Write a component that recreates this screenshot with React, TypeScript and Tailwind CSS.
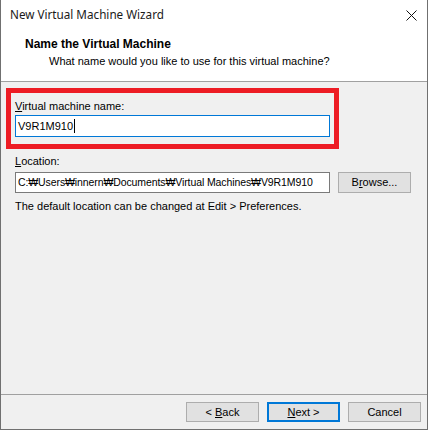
import React from 'react';

const ui = { fontFamily: '"Liberation Sans", Arial, sans-serif' };

const Btn: React.FC<{ children: React.ReactNode; primary?: boolean }> = ({ children, primary }) => (
  <button
    className={
      primary
        ? 'w-[73px] h-[20px] bg-[#e1e1e1] border-2 border-[#0078d7] text-[11px] leading-none text-black'
        : 'w-[73px] h-[20px] bg-[#e1e1e1] border border-[#adadad] text-[11px] leading-none text-black'
    }
  >
    {children}
  </button>
);

export default function App() {
  return (
    <div className="w-[428px] h-[430px] flex flex-col bg-[#f0f0f0] border-x border-b border-[#707070] text-black" style={ui}>
      {/* title bar */}
      <div className="h-[30px] bg-white flex items-center justify-between pl-[9px] pr-[10px] shrink-0">
        <span className="text-[11.7px] text-[#1a1a1a]" style={{ fontFamily: '"Noto Sans", sans-serif' }}>
          New Virtual Machine Wizard
        </span>
        <svg width="11" height="11" viewBox="0 0 11 11">
          <path d="M0.5 0.5 L10.5 10.5 M10.5 0.5 L0.5 10.5" stroke="#111" strokeWidth="1" />
        </svg>
      </div>

      {/* header */}
      <div className="h-[52px] bg-white pt-[6px] shrink-0 border-b border-[#a0a0a0]">
        <div className="pl-[24px] text-[12px] font-bold leading-[16px]">Name the Virtual Machine</div>
        <div className="pl-[48px] text-[11px] leading-[16px] mt-[1px]">What name would you like to use for this virtual machine?</div>
      </div>

      {/* body */}
      <div className="flex-1 flex flex-col text-[11px]">
        <div className="mt-[6px] ml-[5px] w-[333px] h-[61px] border-[5px] border-[#ed1c24] pl-[4px] pt-[5px]">
          <div className="leading-[16px]">
            <span className="underline">V</span>irtual machine name:
          </div>
          <div className="mt-[1px] w-[315px] h-[22px] bg-white border border-[#0078d7] flex items-center pl-[2px]">
            <span>V9R1M910</span>
            <span className="w-px h-[14px] bg-black ml-[1px]" />
          </div>
        </div>

        <div className="pl-[14px] mt-[4px] leading-[16px]">
          <span className="underline">L</span>ocation:
        </div>
        <div className="pl-[14px] mt-[3px] flex items-center gap-[8px]">
          <div className="w-[315px] h-[21px] bg-white border border-[#7a7a7a] flex items-center pl-[2px] whitespace-nowrap text-[10.5px] tracking-[-0.1px]">
            C:₩Users₩innern₩Documents₩Virtual Machines₩V9R1M910
          </div>
          <button className="w-[73px] h-[21px] bg-[#e1e1e1] border border-[#adadad] leading-none">
            B<span className="underline">r</span>owse...
          </button>
        </div>
        <div className="pl-[14px] mt-[5px] leading-[16px]">
          The default location can be changed at Edit &gt; Preferences.
        </div>
      </div>

      {/* footer */}
      <div className="h-[35px] border-t border-[#a0a0a0] shrink-0 flex justify-end items-start pt-[7px] pr-[6px] gap-[8px]">
        <Btn>
          &lt; <span className="underline">B</span>ack
        </Btn>
        <Btn primary>
          <span className="underline">N</span>ext &gt;
        </Btn>
        <Btn>Cancel</Btn>
      </div>
    </div>
  );
}
